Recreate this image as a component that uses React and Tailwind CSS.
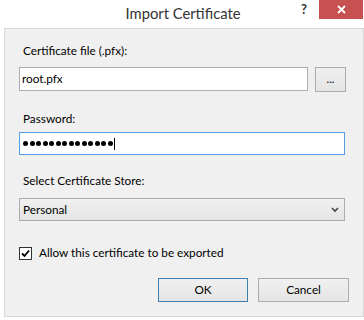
import React from "react";

const font = { fontFamily: "Lato, 'Open Sans', sans-serif" };

function Dots({ n }) {
  return (
    <div className="flex items-center gap-[1.5px]">
      {Array.from({ length: n }).map((_, i) => (
        <div key={i} className="w-[5px] h-[5px] rounded-full bg-black" />
      ))}
    </div>
  );
}

export default function App() {
  return (
    <div
      className="w-[364px] h-[320px] bg-white overflow-hidden text-black relative"
      style={font}
    >
      {/* Title bar */}
      <div className="h-[28px] relative">
        <div className="w-full text-center text-[14.75px] leading-[26px] text-[#333333] pl-[2px]">
          Import Certificate
        </div>
        <div className="absolute top-0 right-[1px] flex items-start">
          <div className="w-[26px] h-[19px] flex items-center justify-center text-[13px] font-bold text-[#333] leading-none mr-[2px]">
            ?
          </div>
          <div className="w-[44px] h-[19px] bg-[#c75050] flex items-center justify-center">
            <svg width="9" height="9" viewBox="0 0 9 9">
              <path d="M1 1 L8 8 M8 1 L1 8" stroke="white" strokeWidth="1.8" />
            </svg>
          </div>
        </div>
      </div>

      {/* Panel */}
      <div className="ml-[4px] w-[360px] h-[289px] border border-[#d9d9d9] bg-[#f0f0f0] pl-[14px] pr-[17px] pt-[14px] flex flex-col text-[11.75px] leading-[16px]">
        <div className="pl-[4px]">Certificate file (.pfx):</div>
        <div className="mt-[8px] flex items-start gap-[7px]">
          <div className="w-[289px] h-[24px] bg-white border border-[#abadb3] flex items-center pl-[2px]">
            root.pfx
          </div>
          <div className="w-[31px] h-[25px] border border-[#acacac] bg-gradient-to-b from-[#f0f0f0] to-[#e5e5e5] flex items-center justify-center text-[11px] leading-none pb-[3px]">
            ...
          </div>
        </div>

        <div className="mt-[19px] pl-[4px]">Password:</div>
        <div className="mt-[5px] w-[326px] h-[23px] bg-white border border-[#569de5] flex items-center pl-[3px]">
          <Dots n={14} />
          <div className="ml-[1px] w-[1px] h-[12px] bg-black" />
        </div>

        <div className="mt-[18px] pl-[4px]">Select Certificate Store:</div>
        <div className="mt-[9px] w-[326px] h-[23px] border border-[#acacac] bg-gradient-to-b from-[#f0f0f0] to-[#e5e5e5] flex items-center justify-between pl-[3px] pr-[5px]">
          <span>Personal</span>
          <svg width="8" height="6" viewBox="0 0 8 6">
            <path d="M1 1 L4 4 L7 1" stroke="#444" strokeWidth="1.6" fill="none" />
          </svg>
        </div>

        <div className="mt-[24px] flex items-center h-[16px]">
          <div className="w-[13px] h-[13px] border border-[#333] bg-white flex items-center justify-center">
            <svg width="9" height="9" viewBox="0 0 9 9">
              <path d="M1 4.5 L3.5 7 L8 1.5" stroke="#000" strokeWidth="1.8" fill="none" />
            </svg>
          </div>
          <span className="ml-[7px]">Allow this certificate to be exported</span>
        </div>

        <div className="mt-[17px] flex justify-end gap-[10px] mr-[-3px]">
          <div className="w-[90px] h-[24px] border border-[#3c7fb1] bg-gradient-to-b from-[#f0f0f0] to-[#e5e5e5] flex items-center justify-center">
            OK
          </div>
          <div className="w-[91px] h-[24px] border border-[#acacac] bg-gradient-to-b from-[#f0f0f0] to-[#e5e5e5] flex items-center justify-center">
            Cancel
          </div>
        </div>
      </div>
    </div>
  );
}
